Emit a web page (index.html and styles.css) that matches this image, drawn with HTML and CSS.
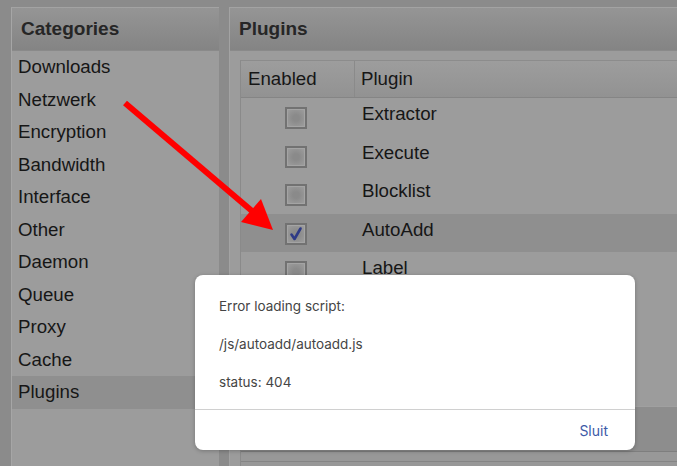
FILE: index.html
```html
<!DOCTYPE html>
<html>
<head>
<meta charset="utf-8">
<link rel="stylesheet" href="styles.css">
</head>
<body>
<div class="page">
  <div class="panel left">
    <div class="panel-header">Categories</div>
    <ul class="cats">
      <li>Downloads</li>
      <li>Netzwerk</li>
      <li>Encryption</li>
      <li>Bandwidth</li>
      <li>Interface</li>
      <li>Other</li>
      <li>Daemon</li>
      <li>Queue</li>
      <li>Proxy</li>
      <li>Cache</li>
      <li class="active">Plugins</li>
    </ul>
  </div>
  <div class="panel right">
    <div class="panel-header">Plugins</div>
    <div class="table">
      <div class="thead">
        <div class="c1">Enabled</div>
        <div class="c2">Plugin</div>
      </div>
      <div class="row"><div class="c1"><span class="cb"></span></div><div class="c2">Extractor</div></div>
      <div class="row"><div class="c1"><span class="cb"></span></div><div class="c2">Execute</div></div>
      <div class="row"><div class="c1"><span class="cb"></span></div><div class="c2">Blocklist</div></div>
      <div class="row sel"><div class="c1"><span class="cb checked"><svg viewBox="0 0 18 18" width="18" height="18"><path d="M4.5 9.5 L7.5 14 L13.5 3.5" fill="none" stroke="#2e3a86" stroke-width="2.6" stroke-linecap="round" stroke-linejoin="round"/></svg></span></div><div class="c2">AutoAdd</div></div>
      <div class="row"><div class="c1"><span class="cb"></span></div><div class="c2">Label</div></div>
      <div class="row"><div class="c1"><span class="cb"></span></div><div class="c2">Notifications</div></div>
      <div class="row"><div class="c1"><span class="cb"></span></div><div class="c2">Scheduler</div></div>
      <div class="row"><div class="c1"><span class="cb"></span></div><div class="c2">Stats</div></div>
      <div class="tfoot"></div>
      <div class="details"><div class="details-inner"></div></div>
    </div>
  </div>
</div>

<svg class="arrow" width="677" height="466" viewBox="0 0 677 466">
  <line x1="125" y1="103" x2="252" y2="211" stroke="#ff0000" stroke-width="6"/>
  <polygon points="241,222 261,199 273,230" fill="#ff0000"/>
</svg>

<div class="modal">
  <div class="modal-body">
    <p>Error loading script:</p>
    <p>/js/autoadd/autoadd.js</p>
    <p>status: 404</p>
  </div>
  <div class="modal-footer">
    <span class="btn">Sluit</span>
  </div>
</div>
</body>
</html>
```
FILE: styles.css
```css
html, body {
  margin: 0;
  padding: 0;
}
body {
  background: #8b8b8b;
  width: 677px;
  height: 466px;
  overflow: hidden;
  position: relative;
  font-family: "Liberation Sans", Arial, sans-serif;
  color: #161616;
}
.page {
  display: flex;
  gap: 10px;
  padding: 7px 0 0 11px;
  width: 677px;
  height: 466px;
  box-sizing: border-box;
  overflow: hidden;
}
.panel {
  background: #9c9c9c;
  border-left: 1px solid #a6a6a6;
  border-top: 1px solid #a3a3a3;
  box-sizing: border-box;
  overflow: hidden;
}
.left {
  width: 208px;
  flex: none;
}
.right {
  flex: 1;
  border-left-color: #a3a3a3;
}
.panel-header {
  height: 42px;
  line-height: 42px;
  padding-left: 9px;
  font-weight: bold;
  font-size: 19px;
  color: #262626;
  background: linear-gradient(#959595, #848484);
  border-bottom: 1px solid #8a8a8a;
}
.cats {
  list-style: none;
  margin: 0;
  padding: 0;
}
.cats li {
  height: 32.5px;
  line-height: 31px;
  padding-left: 6px;
  font-size: 18.7px;
}
.cats li.active {
  background: #8f8f8f;
}
.table {
  margin: 9px 0 0 10px;
  border-left: 1px solid #8a8a8a;
  border-top: 1px solid #8c8c8c;
}
.thead {
  display: flex;
  height: 36px;
  line-height: 35px;
  font-size: 18.7px;
  background: linear-gradient(#9d9d9d, #929292);
  border-bottom: 1px solid #858585;
}
.thead .c1 {
  width: 106px;
  padding-left: 7px;
  border-right: 1px solid #8a8a8a;
}
.thead .c2 {
  padding-left: 6px;
}
.row {
  display: flex;
  height: 38.5px;
  font-size: 18.7px;
}
.row.sel {
  background: #8f8f8f;
}
.row .c1 {
  width: 114px;
  display: flex;
  justify-content: center;
  padding: 9px 4px 0 0;
  box-sizing: border-box;
}
.row .c2 {
  padding: 5px 0 0 7px;
  line-height: 22px;
}
.cb {
  width: 18px;
  height: 18px;
  border: 2px solid #727272;
  background: radial-gradient(circle, #8a8a8a 25%, #a0a0a0 100%);
  box-shadow: inset 0 0 0 1px #a4a4a4;
  display: block;
}
.cb svg {
  display: block;
}
.tfoot {
  height: 44px;
  background: #8d8d8d;
  border-top: 1px solid #a0a0a0;
  border-bottom: 1px solid #7e7e7e;
}
.details {
  height: 30px;
  padding-top: 9px;
  background: #989898;
}
.details-inner {
  height: 30px;
  border-top: 1px solid #858585;
}
.arrow {
  position: absolute;
  left: 0;
  top: 0;
  pointer-events: none;
}
.modal {
  position: absolute;
  left: 195px;
  top: 275px;
  width: 440px;
  height: 175px;
  background: #ffffff;
  border-radius: 8px;
  box-shadow: 0 1px 4px rgba(0, 0, 0, 0.25);
  font-family: Inter, "Open Sans", sans-serif;
  display: flex;
  flex-direction: column;
}
.modal-body {
  padding: 22px 24px 0 24px;
  height: 135px;
  box-sizing: border-box;
  border-bottom: 1px solid #d0d0d0;
}
.modal-body p {
  margin: 0 0 20px 0;
  font-size: 13.5px;
  line-height: 18px;
  color: #454545;
}
.modal-footer {
  flex: 1;
  display: flex;
  justify-content: flex-end;
  align-items: center;
  padding-right: 27px;
}
.btn {
  font-size: 14px;
  color: #3e5aa8;
}
```
